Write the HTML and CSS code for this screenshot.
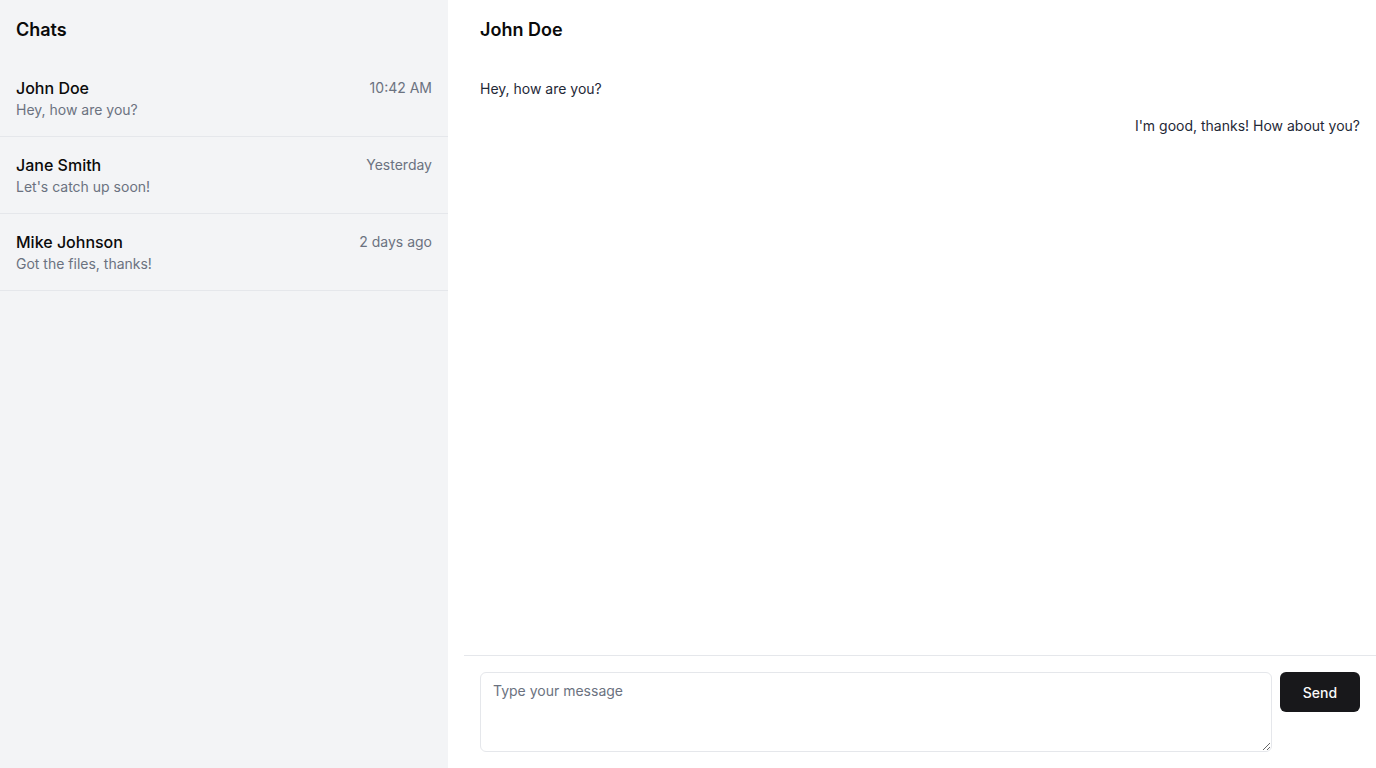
FILE: index.html
```html
<!DOCTYPE html>
<html lang="en">
<head>
<meta charset="utf-8">
<title>Chats</title>
<link rel="stylesheet" href="styles.css">
</head>
<body>
<div class="app">
  <aside class="sidebar">
    <h2 class="sidebar-title">Chats</h2>
    <ul class="chat-list">
      <li class="chat-item">
        <div class="chat-row">
          <span class="chat-name">John Doe</span>
          <span class="chat-time">10:42 AM</span>
        </div>
        <div class="chat-preview">Hey, how are you?</div>
      </li>
      <li class="chat-item">
        <div class="chat-row">
          <span class="chat-name">Jane Smith</span>
          <span class="chat-time">Yesterday</span>
        </div>
        <div class="chat-preview">Let's catch up soon!</div>
      </li>
      <li class="chat-item">
        <div class="chat-row">
          <span class="chat-name">Mike Johnson</span>
          <span class="chat-time">2 days ago</span>
        </div>
        <div class="chat-preview">Got the files, thanks!</div>
      </li>
    </ul>
  </aside>
  <main class="conversation">
    <h2 class="conv-title">John Doe</h2>
    <div class="messages">
      <div class="message incoming">Hey, how are you?</div>
      <div class="message outgoing">I'm good, thanks! How about you?</div>
    </div>
    <form class="composer">
      <textarea class="composer-input" placeholder="Type your message"></textarea>
      <button type="button" class="send-btn">Send</button>
    </form>
  </main>
</div>
</body>
</html>
```
FILE: styles.css
```css
* { box-sizing: border-box; }
html, body {
  margin: 0;
  padding: 0;
  height: 100%;
}
body {
  font-family: Inter, "Noto Sans", "Liberation Sans", sans-serif;
  color: #0a0a0a;
  background: #ffffff;
}
.app {
  display: flex;
  height: 768px;
}
.sidebar {
  width: 448px;
  flex-shrink: 0;
  background: #f3f4f6;
  display: flex;
  flex-direction: column;
}
.sidebar-title {
  margin: 0;
  padding: 16px;
  font-size: 18px;
  line-height: 28px;
  font-weight: 600;
}
.chat-list {
  list-style: none;
  margin: 0;
  padding: 0;
}
.chat-item {
  padding: 16px;
  border-bottom: 1px solid #e5e7eb;
}
.chat-row {
  display: flex;
  justify-content: space-between;
  align-items: center;
}
.chat-name {
  font-size: 16px;
  line-height: 24px;
  font-weight: 500;
}
.chat-time {
  font-size: 14px;
  line-height: 20px;
  color: #6b7280;
}
.chat-preview {
  font-size: 14px;
  line-height: 20px;
  color: #6b7280;
}
.conversation {
  flex: 1;
  display: flex;
  flex-direction: column;
  margin-left: 16px;
  min-width: 0;
}
.conv-title {
  margin: 0;
  padding: 16px;
  font-size: 18px;
  line-height: 28px;
  font-weight: 600;
}
.messages {
  flex: 1;
  padding: 19px 16px 16px;
  display: flex;
  flex-direction: column;
  gap: 17px;
}
.message {
  font-size: 14px;
  line-height: 20px;
  color: #1f2937;
}
.incoming { align-self: flex-start; }
.outgoing { align-self: flex-end; }
.composer {
  margin: 0;
  border-top: 1px solid #e5e7eb;
  padding: 16px;
  display: flex;
  align-items: flex-start;
  gap: 8px;
}
.composer-input {
  flex: 1;
  height: 80px;
  padding: 8px 12px;
  border: 1px solid #e5e7eb;
  border-radius: 6px;
  font-family: inherit;
  font-size: 14px;
  line-height: 20px;
  color: #0a0a0a;
  background: #ffffff;
  outline: none;
}
.composer-input::placeholder { color: #6b7280; }
.send-btn {
  width: 80px;
  height: 40px;
  border: none;
  border-radius: 6px;
  background: #18181b;
  color: #fafafa;
  font-family: inherit;
  font-size: 14px;
  font-weight: 500;
  cursor: pointer;
}
```
